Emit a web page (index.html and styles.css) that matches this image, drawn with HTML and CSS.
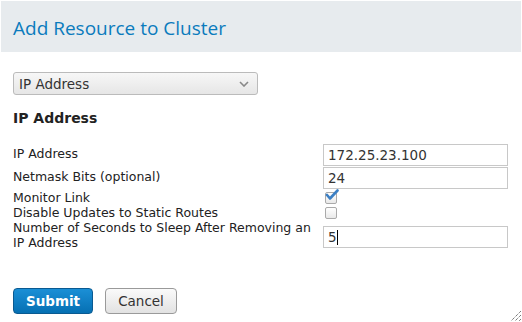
FILE: index.html
```
<!DOCTYPE html>
<html lang="en">
<head>
    <meta charset="UTF-8">
    <title>Add Resource to Cluster</title>
    <link rel="stylesheet" href="styles.css">
</head>
<body>
    <div class="dialog">
        <div class="titlebar">
            <span class="title">Add Resource to Cluster</span>
        </div>
        <div class="content">
            <div class="select">
                <span>IP Address</span>
                <svg class="caret" width="10" height="6" viewBox="0 0 10 6"><path d="M1 1 L5 5 L9 1" fill="none" stroke="#888" stroke-width="1.6"/></svg>
            </div>
            <h3 class="section">IP Address</h3>
            <div class="fields">
                <div class="lbl">IP Address</div>
                <div class="inp">172.25.23.100</div>

                <div class="lbl">Netmask Bits (optional)</div>
                <div class="inp">24</div>

                <div class="lbl chklbl">Monitor Link</div>
                <div class="chk">
                    <svg class="tick" width="14" height="12" viewBox="0 0 14 12"><path d="M2 6 L5 9.5 L12.5 1.5" fill="none" stroke="#3b7fc4" stroke-width="2.6" stroke-linecap="round" stroke-linejoin="round"/></svg>
                </div>

                <div class="lbl chklbl">Disable Updates to Static Routes</div>
                <div class="chk"></div>

                <div class="lbl chklbl">Number of Seconds to Sleep After Removing an IP Address</div>
                <div class="inp lastinp">5<span class="cursor"></span></div>
            </div>
            <div class="buttons">
                <button class="btn primary">Submit</button>
                <button class="btn">Cancel</button>
            </div>
        </div>
        <svg class="grip" width="13" height="13" viewBox="0 0 13 13">
            <path d="M12 2 L2 12 M12 6 L6 12 M12 10 L10 12" stroke="#444" stroke-width="1" stroke-dasharray="1 1"/>
        </svg>
    </div>
</body>
</html>
```
FILE: styles.css
```
body{
    margin: 0;
    background: #fff;
    font-family: "DejaVu Sans", sans-serif;
    font-size: 12.5px;
    color: #222;
}
.dialog{
    position: relative;
    width: 522px;
    height: 322px;
    padding-top: 1px;
    box-sizing: border-box;
}
.titlebar{
    margin: 0 1px;
    height: 51px;
    background-color: #e7ebee;
    padding-left: 12px;
    display: flex;
    align-items: center;
}
.title{
    font-family: "Open Sans", sans-serif;
    font-size: 19px;
    color: #0b7bbd;
    padding-top: 2px;
}
.content{
    padding: 20px 13px 0 13px;
}
.select{
    width: 245px;
    height: 23px;
    box-sizing: border-box;
    border: 1px solid #bbb;
    border-radius: 3px;
    background: linear-gradient(#f7f7f7, #e6e6e6);
    display: flex;
    align-items: center;
    justify-content: space-between;
    padding: 0 8px 0 5px;
    font-size: 13.5px;
    color: #333;
}
.section{
    margin: 15px 0 18px 0;
    font-size: 14px;
    font-weight: bold;
    color: #222;
}
.fields{
    display: grid;
    grid-template-columns: 310px 185px;
    grid-template-rows: 23px 23px 15px 15px 30px;
}
.lbl{
    line-height: 15px;
    margin-top: 2px;
    padding-right: 10px;
}
.chklbl{
    margin-top: 0;
}
.inp{
    height: 22px;
    box-sizing: border-box;
    border: 1px solid #c8c8c8;
    padding: 2px 4px;
    font-size: 13.5px;
    line-height: 16px;
    color: #333;
}
.lastinp{
    margin-top: 6px;
}
.cursor{
    display: inline-block;
    width: 1px;
    height: 15px;
    background: #000;
    vertical-align: -3px;
}
.chk{
    position: relative;
    align-self: center;
    width: 10px;
    height: 10px;
    margin-left: 2px;
    border: 1px solid #aaa;
    border-radius: 2px;
    background: linear-gradient(#fff, #e9e9e9);
}
.tick{
    position: absolute;
    left: -1px;
    top: -4px;
}
.buttons{
    margin-top: 38px;
    display: flex;
    gap: 12px;
}
.btn{
    height: 26px;
    border-radius: 4px;
    font-family: "DejaVu Sans", sans-serif;
    font-size: 13.5px;
    border: 1px solid #9a9a9a;
    background: linear-gradient(#fafafa, #e2e2e2);
    color: #333;
    width: 72px;
    padding: 0;
}
.btn.primary{
    width: 80px;
    border-color: #0a5a91;
    background: linear-gradient(#1b8fd6, #0670b3);
    color: #fff;
    font-weight: bold;
}
.grip{
    position: absolute;
    right: 0;
    bottom: 0;
}
```
